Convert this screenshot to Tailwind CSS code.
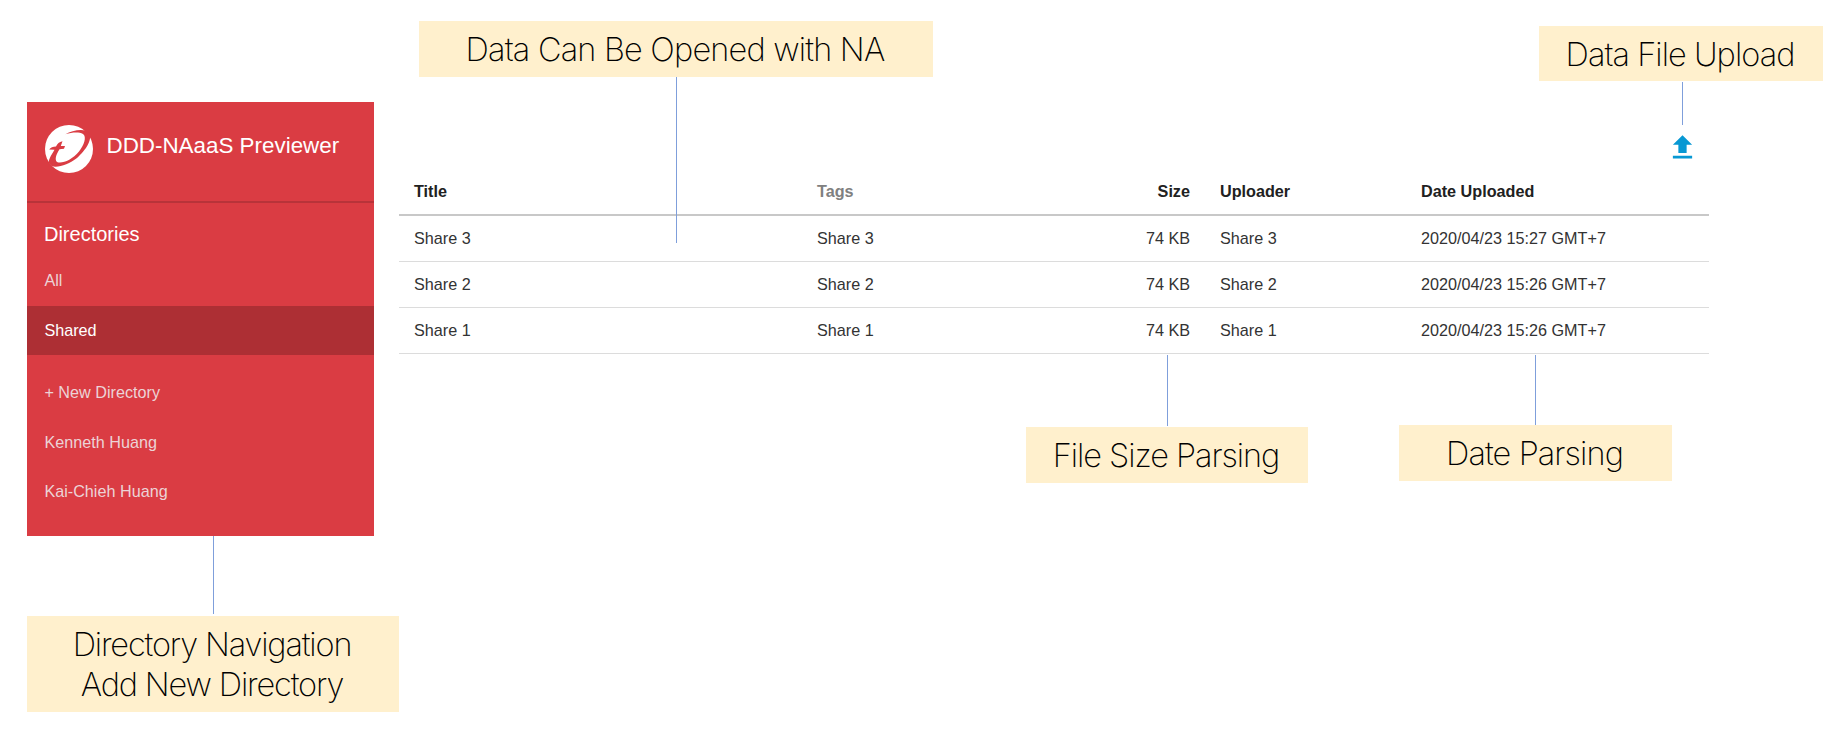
<!DOCTYPE html>
<html lang="en">
<head>
<meta charset="utf-8">
<title>DDD-NAaaS Previewer</title>
<script src="https://cdn.jsdelivr.net/npm/@tailwindcss/browser@4"></script>
</head>
<body class="bg-white">
<main class="relative flex h-[729px] w-[1841px] overflow-hidden font-['Liberation_Sans',Arial,sans-serif] text-[16.2px]">

  <!-- Sidebar -->
  <aside class="mt-[102px] ml-[27.4px] flex h-[433.6px] w-[346.6px] shrink-0 flex-col bg-[#da3c43] text-[#ecd3d6]">
    <header class="flex h-[101px] items-start gap-[13.5px] border-b-2 border-[#b83339] pl-[17.6px]">
      <svg class="mt-[23px] size-[48px] shrink-0" viewBox="0 0 48 48">
        <circle cx="24" cy="24" r="24" fill="#fff"/>
        <path d="M20.500 9.300C27 5 40 3 44 7.500C48 14 41 25 32 33C24 39.500 12 43.500 6.500 41L3.500 37.500C4 33 7 29 9.500 24.800L4.200 24.600C5.500 22.300 8 21.700 11 21.500C12.500 18.700 14 17 17.500 16.300L15.800 21H20L19 23.700L14.500 24.300C11 30 9.500 34.500 12 37C17 39 27 35 34 26.500C39 20 42 12 38 9C34 6.800 27 7.300 20.500 9.300Z" fill="#da3c43"/>
      </svg>
      <h1 class="mt-[30px] text-[22.4px] leading-[28px] whitespace-nowrap text-white">DDD-NAaaS Previewer</h1>
    </header>
    <h2 class="mt-[17px] pl-[16.600px] text-[20px] leading-[28px] text-white">Directories</h2>
    <nav class="mt-[8px] flex flex-col">
      <a class="flex h-[50px] items-center pb-[2px] pl-[17px]">All</a>
      <a class="flex h-[49px] items-center bg-[#ad2f34] pl-[17px] text-white">Shared</a>
      <a class="mt-[12.600px] flex h-[49.600px] items-center pl-[17px]">+ New Directory</a>
      <a class="flex h-[49.600px] items-center pl-[17px]">Kenneth Huang</a>
      <a class="flex h-[49.600px] items-center pl-[17px]">Kai-Chieh Huang</a>
    </nav>
  </aside>

  <!-- File list -->
  <section class="ml-[25px] flex w-[1310.500px] shrink-0 flex-col">
    <div class="flex h-[164px] items-end justify-end pr-[10.500px]">
      <svg class="size-[33px]" viewBox="0 0 24 24" fill="#0798d3"><path d="M9 16h6v-6h4l-7-7-7 7h4zm-4 2h14v2H5z"/></svg>
    </div>
    <table class="w-full table-fixed border-collapse text-left text-[#333]">
      <colgroup><col class="w-[403px]"><col class="w-[201px]"><col class="w-[202px]"><col class="w-[201px]"><col></colgroup>
      <thead>
        <tr class="h-[51px] border-b-2 border-[#c8c8c8] text-[#212121]">
          <th class="pt-[5px] pl-[15px]">Title</th><th class="pt-[5px] pl-[15px] text-[#808080]">Tags</th><th class="pt-[5px] pr-[15px] text-right">Size</th><th class="pt-[5px] pl-[15px]">Uploader</th><th class="pt-[5px] pl-[15px]">Date Uploaded</th>
        </tr>
      </thead>
      <tbody>
        <tr class="h-[46px] border-b border-[#dcdcdc]">
          <td class="pl-[15px]">Share 3</td><td class="pl-[15px]">Share 3</td><td class="pr-[15px] text-right">74 KB</td><td class="pl-[15px]">Share 3</td><td class="pl-[15px]">2020/04/23 15:27 GMT+7</td>
        </tr>
        <tr class="h-[46px] border-b border-[#dcdcdc]">
          <td class="pl-[15px]">Share 2</td><td class="pl-[15px]">Share 2</td><td class="pr-[15px] text-right">74 KB</td><td class="pl-[15px]">Share 2</td><td class="pl-[15px]">2020/04/23 15:26 GMT+7</td>
        </tr>
        <tr class="h-[46px] border-b border-[#dcdcdc]">
          <td class="pl-[15px]">Share 1</td><td class="pl-[15px]">Share 1</td><td class="pr-[15px] text-right">74 KB</td><td class="pl-[15px]">Share 1</td><td class="pl-[15px]">2020/04/23 15:26 GMT+7</td>
        </tr>
      </tbody>
    </table>
  </section>

  <!-- Callouts laid over the canvas -->
  <div class="font-['Inter',sans-serif] text-[32.5px] leading-[40px] font-extralight text-black">
    <div class="absolute top-[77px] left-[676px] h-[166px] w-px bg-[#7f9fdb]"></div>
    <div class="absolute top-[82px] left-[1682px] h-[43px] w-px bg-[#7f9fdb]"></div>
    <div class="absolute top-[355px] left-[1167px] h-[71px] w-px bg-[#7f9fdb]"></div>
    <div class="absolute top-[355px] left-[1535px] h-[71px] w-px bg-[#7f9fdb]"></div>
    <div class="absolute top-[536px] left-[213px] h-[78px] w-px bg-[#7f9fdb]"></div>

    <p class="absolute top-[21px] left-[419px] flex h-[56px] w-[514px] items-center justify-center bg-[#fff0cd] pt-[2px] pr-[2px] tracking-[-0.8px] whitespace-nowrap">Data Can Be Opened with NA</p>
    <p class="absolute top-[26px] left-[1539px] flex h-[55px] w-[284px] items-center justify-center bg-[#fff0cd] pt-[2px] pr-[2px] tracking-[-0.95px] whitespace-nowrap">Data File Upload</p>
    <p class="absolute top-[427px] left-[1026px] flex h-[56px] w-[282px] items-center justify-center bg-[#fff0cd] pt-[2px] pr-[2px] tracking-[-1.05px] whitespace-nowrap">File Size Parsing</p>
    <p class="absolute top-[425px] left-[1399px] flex h-[56px] w-[273px] items-center justify-center bg-[#fff0cd] pt-[2px] pr-[2px] tracking-[-0.9px] whitespace-nowrap">Date Parsing</p>
    <p class="absolute top-[616px] left-[27px] flex h-[95.500px] w-[372px] items-center justify-center bg-[#fff0cd] pt-[2px] pr-[2px] text-center tracking-[-1.15px] whitespace-nowrap">Directory Navigation<br>Add New Directory</p>
  </div>
</main>
</body>
</html>
